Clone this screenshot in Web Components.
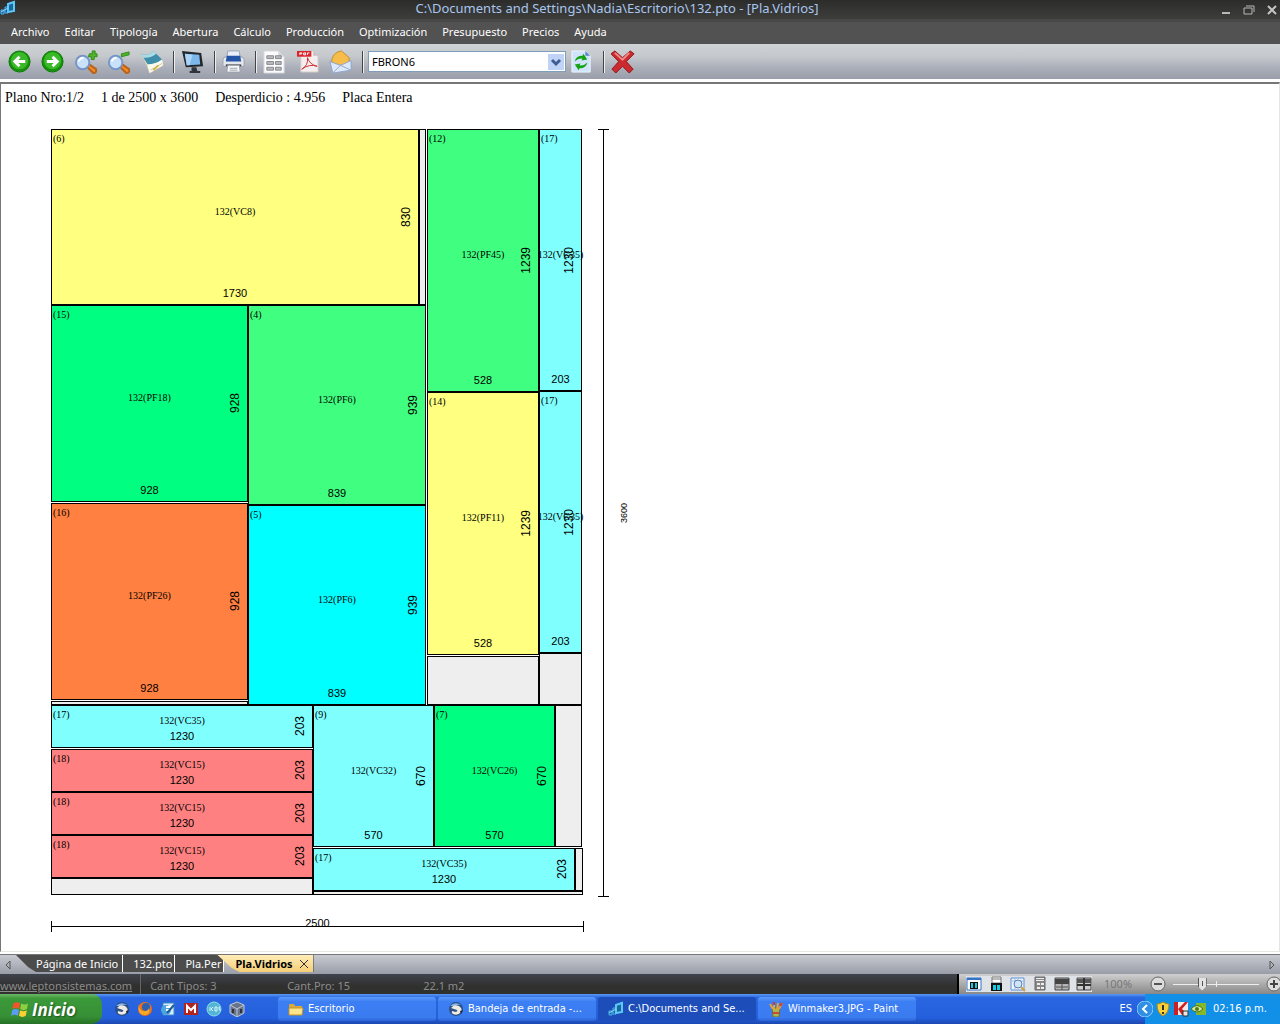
<!DOCTYPE html>
<html lang="es">
<head>
<meta charset="utf-8">
<title>C:\Documents and Settings\Nadia\Escritorio\132.pto - [Pla.Vidrios]</title>
<style>
  html, body {
    height: 100%;
    margin: 0;
  }

  body {
    overflow: hidden;
    font-family: "Noto Sans", "Open Sans", sans-serif;
    font-size: 12px;
  }
</style>
</head>
<body>

<app-window>
  <title-bar slot="top">C:\Documents and Settings\Nadia\Escritorio\132.pto - [Pla.Vidrios]</title-bar>
  <menu-bar slot="top" items="Archivo,Editar,Tipología,Abertura,Cálculo,Producción,Optimización,Presupuesto,Precios,Ayuda"></menu-bar>
  <tool-bar slot="top"></tool-bar>

  <plan-view>
    <span slot="info">Plano Nro:1/2</span>
    <span slot="info">1 de 2500 x 3600</span>
    <span slot="info">Desperdicio : 4.956</span>
    <span slot="info">Placa Entera</span>
    <cutting-sheet></cutting-sheet>
    <dimension-line vertical slot="height">3600</dimension-line>
    <dimension-line slot="width">2500</dimension-line>
  </plan-view>

  <tab-strip slot="bottom">
    <doc-tab>Página de Inicio</doc-tab>
    <doc-tab>132.pto</doc-tab>
    <doc-tab>Pla.Per</doc-tab>
    <doc-tab active>Pla.Vidrios</doc-tab>
  </tab-strip>
  <status-bar slot="bottom"></status-bar>
  <task-bar slot="bottom">
    <task-button icon="folder">Escritorio</task-button>
    <task-button icon="bird">Bandeja de entrada -...</task-button>
    <task-button icon="logo" active>C:\Documents and Se...</task-button>
    <task-button icon="paint">Winmaker3.JPG - Paint</task-button>
  </task-bar>
</app-window>

<script>
const ICONS = {
  logo: `<path d="M1 10h3v4H1zM5 7h3v6H5z" fill="#1c5f9c" stroke="#49b4ee"/><path d="M8 4l6-2v9l-6 1z" fill="#17689f" stroke="#5cc8f8" stroke-width="2"/><path d="M1 12l7-4" stroke="#8fd8ff"/>`,
  back: `<circle cx="12" cy="12" r="11" fill="#16910c" stroke="#0d7a08"/><circle cx="12" cy="11" r="9" fill="#3ab928"/><path d="M18 12H7M12 7l-5 5 5 5" fill="none" stroke="#fff" stroke-width="3"/>`,
  forward: `<circle cx="12" cy="12" r="11" fill="#16910c" stroke="#0d7a08"/><circle cx="12" cy="11" r="9" fill="#3ab928"/><path d="M6 12h11M12 7l5 5-5 5" fill="none" stroke="#fff" stroke-width="3"/>`,
  zoomIn: `<path d="M13 17l3-2 7 5q1 4-3 4z" fill="#f08a24" stroke="#b8621a" stroke-width="2"/><circle cx="9" cy="13" r="7" fill="#c9e2fa" stroke="#7595c8" stroke-width="2"/><path d="M5 12q1-4 5-4" stroke="#fff" stroke-width="2" fill="none"/><path d="M16 4h3V1h3v3h2v3h-3v3h-3V7h-3z" fill="#4fb52b" stroke="#2d8a16"/>`,
  zoomOut: `<path d="M13 17l3-2 7 5q1 4-3 4z" fill="#f08a24" stroke="#b8621a" stroke-width="2"/><circle cx="9" cy="13" r="7" fill="#c9e2fa" stroke="#7595c8" stroke-width="2"/><path d="M5 12q1-4 5-4" stroke="#fff" stroke-width="2" fill="none"/><path d="M15 4l8-2v3l-8 2z" fill="#4fb52b" stroke="#2d8a16"/>`,
  book: `<path d="M1 4l6 12 3 8 14-8-1-5z" fill="#f4f2dc" stroke="#c9c8ad"/><path d="M1 4q7 3 13-3l9 9q-7 5-15 5z" fill="#3f8fac"/><path d="M1 4q7 3 13-3l3 3Q11 9 3 8z" fill="#a9dce6"/><path d="M8 15q8 1 15-5l1 6-14 8z" fill="#fbfaf0"/><path d="M11 21l12-7" stroke="#c3c1a3"/><path d="M14 21l5-5" stroke="#d7b13d" stroke-width="2"/>`,
  monitor: `<path d="M1 1l20 2 2 14-18 1z" fill="#23272d"/><path d="M4 4l15 1 1 10-14 1z" fill="#7db8ec"/><path d="M4 4l8 1-3 11H6z" fill="#a9d4f7"/><path d="M11 18h5l1 4h3v2H9v-2h2z" fill="#30343a"/>`,
  printer: `<path d="M6 1h12l1 8H5z" fill="#e9eef8" stroke="#9aa4b5"/><path d="M1 10q0-3 4-3h14q4 0 4 3v7H1z" fill="#e4e7ec" stroke="#9aa0aa"/><path d="M5 6h14l1 6H4z" fill="#2454a8"/><path d="M4 15h16v2H4z" fill="#3b4048"/><path d="M6 16h12l1 7H5z" fill="#f7f8fa" stroke="#9aa0aa"/><path d="M8 19h8M8 21h8" stroke="#9aa0aa"/>`,
  report: `<path d="M1 1h15l6 6v17H1z" fill="#fcfcfc" stroke="#d5d6da"/><path d="M16 1v6h6z" fill="#d5d6da"/><path d="M4 6h7v3H4zM13 6h6v3h-6zM4 12h7v3H4zM13 12h6v3h-6zM4 18h7v3H4zM13 18h6v3h-6z" fill="#b8babf" stroke="#85878c"/>`,
  pdf: `<path d="M5 1h13l5 5v17H5z" fill="#f4eeee" stroke="#cfc5c5"/><path d="M1 1h15v6H1z" fill="#d8262d"/><path d="M4 5V3h2v1H4M8 5V3h2v2H8M12 5V3h2" stroke="#fff" fill="none"/><path d="M18 1l5 5h-5z" fill="#c5c0c4"/><path d="M6 20q7-4 6-12 2 7 10 9-8-3-16 3z" stroke="#d02c32" stroke-width="1" fill="none"/>`,
  mail: `<path d="M1 12l10-8 12 8v9L4 24z" fill="#e5effc" stroke="#93a6c8"/><path d="M3 10q2-8 10-9l8 7v5l-9 3-9-3z" fill="#f6bd4a" stroke="#c58a26"/><path d="M1 12l11 4 11-5v10L4 24z" fill="#dce9fa" stroke="#93a6c8"/><path d="M4 24l8-8 11 5" fill="none" stroke="#93a6c8"/>`,
  refresh: `<path d="M2 1h14l5 5v17H2z" fill="#cfe3fb" stroke="#eff6ff"/><path d="M16 1l5 5h-5z" fill="#5b83c8"/><path d="M5 12q1-6 8-6l1-2 4 6-6 1 1-2q-4-1-8 3zM18 13q-1 6-8 6l-1 2-4-6 6-1-1 2q4 1 8-3z" fill="#14a313"/>`,
  remove: `<path d="M4 1l8 7 8-7 4 3-8 8 7 8-4 4-7-7-7 7-4-4 7-8-8-8z" fill="#cb2a2e" stroke="#8f1418"/><path d="M4 3l8 7 7-7" stroke="#f08a86" stroke-width="2" fill="none"/>`,
  chevron: `<path d="M4 6l4 4 4-4" fill="none" stroke="#3f5c93" stroke-width="3"/>`,
  minimize: `<path d="M4 11h8" stroke="#b8b8b8" stroke-width="2"/>`,
  restore: `<path d="M3 6h8v6H3zM5 4h8v6" fill="none" stroke="#b8b8b8"/>`,
  close: `<path d="M4 4l8 8M12 4l-8 8" stroke="#c4c4c4" stroke-width="2"/>`,
  scrollLeft: `<path d="M10 4v8L6 8z" fill="none" stroke="#555"/>`,
  scrollRight: `<path d="M6 4v8l4-4z" fill="none" stroke="#555"/>`,
  cross: `<path d="M4 4l8 8M12 4l-8 8" stroke="#333"/>`,
  viewPlan: `<path d="M1 2h14v12H1z" fill="#fff" stroke="#3473c6"/><path d="M1 3h14" stroke="#3473c6" stroke-width="2"/><path d="M4 6h8v7H4z" fill="#111"/><path d="M5 7h2v5H5zM9 7h2v5H9z" fill="#19cde0"/>`,
  viewSheet: `<path d="M4 1h9v6H4z" fill="#fff" stroke="#777"/><path d="M4 3h9" stroke="#777"/><path d="M3 7h11v8H3z" fill="#111"/><path d="M5 9h3v5H5zM9 9h3v5H9z" fill="#19cde0"/>`,
  viewZoom: `<path d="M1 2h13v12H1z" fill="#eef4fc" stroke="#5d92d0"/><path d="M1 5h13M5 2v12" stroke="#9fbfe4"/><circle cx="8" cy="8" r="4" fill="#cfe4f8" stroke="#5b7fae"/><path d="M11 11l4 4" stroke="#d5a03b" stroke-width="2"/>`,
  viewTable: `<path d="M3 1h10v13H3z" fill="#888" stroke="#666"/><path d="M4 2h8v1H4zM4 4h8v1H4z" fill="#eee"/><path d="M5 7h3v2H5zM9 7h3v2H9zM5 11h3v2H5zM9 11h3v2H9z" fill="#eee"/>`,
  viewSplit: `<path d="M1 2h14v12H1z" fill="#b5b5b5" stroke="#444"/><path d="M1 3h14v5H1z" fill="#444"/><path d="M8 8v6M2 11h12" stroke="#555"/>`,
  viewQuad: `<path d="M1 2h14v12H1z" fill="#ccc" stroke="#444"/><path d="M1 3h14v4H1z" fill="#555"/><path d="M8 2v12M1 9h14" stroke="#333" stroke-width="2"/>`,
  minus: `<circle cx="8" cy="8" r="7" fill="#ddd" stroke="#666"/><path d="M4 8h8" stroke="#555" stroke-width="2"/>`,
  plus: `<circle cx="8" cy="8" r="7" fill="#ddd" stroke="#666"/><path d="M4 8h8M8 4v8" stroke="#444" stroke-width="2"/>`,
  windows: `<path d="M3 3q3-2 6 0L8 8Q5 6 2 8z" fill="#f0562a"/><path d="M10 3q3 2 6 0l-1 5q-3 2-6 0z" fill="#8fd03f"/><path d="M2 9q3-2 6 0l-1 5q-3-2-6 0z" fill="#5b9cf5"/><path d="M9 9q3 2 6 0l-1 5q-3 2-6 0z" fill="#fcd02f"/>`,
  bird: `<circle cx="8" cy="8" r="7" fill="#2c4f86"/><path d="M2 5q5-5 11-1-4-1-6 1z" fill="#8ab8ea"/><path d="M3 7q3-4 8-2 4 3 2 6-3 4-8 2-2-1-1-3l4 1q2-1 1-2z" fill="#eceae2"/><path d="M12 10l3-1-2 4z" fill="#1b2436"/>`,
  firefox: `<circle cx="8" cy="8" r="7" fill="#e8701a"/><circle cx="9" cy="6" r="4" fill="#2d5fb3"/><path d="M2 3q0 8 6 7 3 0 4-3 2 6-4 7Q0 14 2 3z" fill="#f7a928"/>`,
  notes: `<path d="M3 2h11v12H3z" fill="#d6ecfb" stroke="#3c86c4"/><circle cx="6" cy="9" r="5" fill="#4aa5e0"/><path d="M6 6h5M6 9h3" stroke="#fff" stroke-width="2"/><path d="M7 12l7-8" fill="none" stroke="#1d5d99" stroke-width="2"/>`,
  gmail: `<path d="M1 2h14v12H1z" fill="#b3231d"/><path d="M4 12V5l4 4 4-4v7" fill="none" stroke="#fff" stroke-width="2"/>`,
  disc: `<circle cx="8" cy="8" r="7" fill="#52b5d3" stroke="#8adbee"/><path d="M4 6v4M7 6L5 8l2 2M9 6v4h2V6zM14 6h-1v2h1v2" fill="none" stroke="#d9f5fb"/>`,
  cube: `<path d="M8 1l7 3v8l-7 4-7-4V4z" fill="#68748a" stroke="#c0c9d6"/><path d="M1 4l7 4 7-4M8 8v8" fill="none" stroke="#c0c9d6"/><path d="M4 8v4M12 8v4" stroke="#2b3444" stroke-width="2"/>`,
  folder: `<path d="M1 4q0-1 1-1h4l1 2h7v9H1z" fill="#d9a93a"/><path d="M1 7h14l-1 7H1z" fill="#fbe48a" stroke="#c4922a"/>`,
  paint: `<path d="M4 7h8l-1 9H5z" fill="#a7b84c" stroke="#6f6a38"/><path d="M6 9V1M9 9l1-7M11 8l3-6M5 8L2 3" stroke="#e0a43c" stroke-width="2"/><path d="M6 1v3M14 2l-2 3" stroke="#d33a2a" stroke-width="2"/><path d="M5 12h6" stroke="#d0473a" stroke-width="2"/>`,
  trayArrow: `<circle cx="8" cy="8" r="8" fill="#2f8fe6" stroke="#8cc8fa"/><path d="M10 4L6 8l4 4" fill="none" stroke="#fff" stroke-width="2"/>`,
  shield: `<path d="M8 1q3 2 6 2 0 9-6 12Q2 12 2 3q3 0 6-2z" fill="#f8cf35" stroke="#a78a22"/><path d="M8 4v5M8 11v2" stroke="#333" stroke-width="2"/>`,
  kav: `<path d="M1 1h14v13H1z" fill="#f3e9e9"/><path d="M5 8l7-7h3l-6 7 6 6H9z" fill="#cf1e20"/><path d="M1 1h4v13H1z" fill="#c92023"/><path d="M10 10h5v5h-5z" fill="#e8e8e8" stroke="#333"/>`,
  nvidia: `<path d="M5 2h10v12H5z" fill="#86b82a"/><path d="M0 8q6-7 12 0-6 6-12 0z" fill="#d5e8a5" stroke="#4f7a12"/><circle cx="6" cy="8" r="2" fill="#4f7a12"/>`
};

function icon(name, size = 16) {
  const box = size === 24 ? 25 : 16;
  return `<svg width="${size}" height="${size}" viewBox="0 0 ${box} ${box}" fill="none" aria-hidden="true">${ICONS[name]}</svg>`;
}

const BUTTON_RESET = `
  button {
    display: grid;
    place-items: center;
    margin: 0;
    padding: 0;
    border: 0;
    background: none;
    color: inherit;
    font: inherit;
  }

  svg { display: block; flex: none; }
`;

class BaseElement extends HTMLElement {
  constructor() {
    super();
    this.attachShadow({ mode: "open" });
  }

  connectedCallback() {
    this.shadowRoot.innerHTML = this.render();
  }
}

class AppWindow extends BaseElement {
  render() {
    return `
      <style>
        :host {
          display: flex;
          flex-direction: column;
          height: 100vh;
          background: #fff;
        }

        main {
          flex: 1;
          min-height: 0;
          display: flex;
        }
      </style>
      <slot name="top"></slot>
      <main><slot></slot></main>
      <slot name="bottom"></slot>
    `;
  }
}

class TitleBar extends BaseElement {
  render() {
    return `
      <style>
        ${BUTTON_RESET}
        :host {
          display: flex;
          height: 19px;
          border-bottom: 3px solid #484848;
          background: linear-gradient(#2c2c2b, #3d3d3c);
          color: #a9c6ee;
          line-height: 16px;
        }

        h1 {
          flex: 1;
          margin: 0;
          font-size: 13px;
          font-weight: 400;
          text-align: center;
        }

        .controls {
          display: flex;
          gap: 7px;
        }
      </style>
      ${icon("logo")}
      <h1><slot></slot></h1>
      <div class="controls">
        <button aria-label="Minimizar">${icon("minimize")}</button>
        <button aria-label="Restaurar">${icon("restore")}</button>
        <button aria-label="Cerrar">${icon("close")}</button>
      </div>
    `;
  }
}

class MenuBar extends BaseElement {
  render() {
    const items = this.getAttribute("items").split(",");
    return `
      <style>
        ${BUTTON_RESET}
        :host {
          display: block;
          background: #525252;
          color: #fff;
          font-size: 11px;
        }

        nav {
          display: flex;
          gap: 15px;
          height: 22px;
          padding: 0 11px;
        }

        button { line-height: 20px; align-items: start; }
      </style>
      <nav>${items.map((item) => `<button>${item}</button>`).join("")}</nav>
    `;
  }
}

class ToolBar extends BaseElement {
  tool(name, label) {
    return `<button aria-label="${label}">${icon(name, 24)}</button>`;
  }

  render() {
    return `
      <style>
        ${BUTTON_RESET}
        :host {
          display: flex;
          align-items: center;
          gap: 9px;
          height: 35px;
          padding: 0 8px;
          background: linear-gradient(#d0d3d5, #c5c8cc 35%, #a9adb8 70%, #9a9eaa);
        }

        hr {
          width: 1px;
          height: 22px;
          margin: 0 -3px 0 0;
          border: 0;
          border-right: 1px solid #eee;
          background: #444;
        }

        .combo {
          display: grid;
          width: 198px;
          margin: 0 -5px 0 -2px;
        }

        .combo > * { grid-area: 1 / 1; }

        .combo svg {
          justify-self: end;
          align-self: center;
          margin-right: 2px;
          background: #c1d2f7;
          pointer-events: none;
        }

        select {
          appearance: none;
          height: 21px;
          padding: 0 3px;
          border: 1px solid #7f9db9;
          border-radius: 0;
          background: #fff;
          color: #000;
          font-family: inherit;
          font-size: 11px;
        }
      </style>
      ${this.tool("back", "Atrás")}
      ${this.tool("forward", "Adelante")}
      ${this.tool("zoomIn", "Acercar")}
      ${this.tool("zoomOut", "Alejar")}
      ${this.tool("book", "Catálogo")}
      <hr>
      ${this.tool("monitor", "Pantalla")}
      <hr>
      ${this.tool("printer", "Imprimir")}
      <hr>
      ${this.tool("report", "Planilla")}
      ${this.tool("pdf", "Exportar PDF")}
      ${this.tool("mail", "Enviar")}
      <hr>
      <div class="combo">
        <select aria-label="Vidrio"><option>FBRON6</option></select>
        ${icon("chevron")}
      </div>
      ${this.tool("refresh", "Actualizar")}
      <hr>
      ${this.tool("remove", "Eliminar")}
    `;
  }
}

class PlanView extends BaseElement {
  render() {
    return `
      <style>
        :host {
          flex: 1;
          display: block;
          margin-top: 3px;
          border: 1px solid #777;
          border-width: 2px 1px 1px 1px;
          border-color: #777 #e4e4e4 #e8e6e0 #777;
          background: #fff;
          color: #000;
        }

        header {
          display: flex;
          gap: 17px;
          height: 45px;
          padding-left: 4px;
          font: 14px/28px "Liberation Serif", serif;
        }

        .plan {
          display: grid;
          grid-template-columns: 532px auto;
          justify-content: start;
          gap: 20px 15px;
          padding-left: 50px;
        }
      </style>
      <header><slot name="info"></slot></header>
      <div class="plan">
        <slot></slot>
        <slot name="height"></slot>
        <slot name="width"></slot>
      </div>
    `;
  }
}

const YELLOW = "#ffff80";
const GREEN = "#00ff80";
const LIGHT_GREEN = "#40ff80";
const ORANGE = "#ff8040";
const CYAN = "#00ffff";
const LIGHT_CYAN = "#80ffff";
const RED = "#ff8080";
const WASTE = "#eeeeee";

// left, top, width, height, colour, mark, code, size across, size down
const PIECES = [
  [0, 0, 368, 176, YELLOW, 6, "132(VC8)", 1730, 830],
  [368, 0, 7, 176, WASTE],
  [376, 0, 112, 263, LIGHT_GREEN, 12, "132(PF45)", 528, 1239],
  [488, 0, 43, 262, LIGHT_CYAN, 17, "132(VC35)", 203, 1230],
  [0, 176, 197, 197, GREEN, 15, "132(PF18)", 928, 928],
  [197, 176, 178, 200, LIGHT_GREEN, 4, "132(PF6)", 839, 939],
  [376, 263, 112, 263, YELLOW, 14, "132(PF11)", 528, 1239],
  [488, 262, 43, 262, LIGHT_CYAN, 17, "132(VC35)", 203, 1230],
  [0, 374, 197, 197, ORANGE, 16, "132(PF26)", 928, 928],
  [0, 572, 197, 4, WASTE],
  [197, 376, 178, 200, CYAN, 5, "132(PF6)", 839, 939],
  [376, 527, 112, 49, WASTE],
  [488, 524, 43, 52, WASTE],
  [0, 576, 262, 43, LIGHT_CYAN, 17, "132(VC35)", 1230, 203],
  [0, 620, 262, 43, RED, 18, "132(VC15)", 1230, 203],
  [0, 663, 262, 43, RED, 18, "132(VC15)", 1230, 203],
  [0, 706, 262, 43, RED, 18, "132(VC15)", 1230, 203],
  [0, 749, 262, 17, WASTE],
  [262, 576, 121, 142, LIGHT_CYAN, 9, "132(VC32)", 570, 670],
  [383, 576, 121, 142, GREEN, 7, "132(VC26)", 570, 670],
  [504, 576, 27, 142, WASTE],
  [262, 719, 262, 43, LIGHT_CYAN, 17, "132(VC35)", 1230, 203],
  [524, 719, 8, 43, WASTE],
  [262, 762, 270, 4, WASTE]
];

class CuttingSheet extends BaseElement {
  connectedCallback() {
    super.connectedCallback();
    for (const [left, top, width, height, color, mark, code, across, down] of PIECES) {
      const piece = document.createElement("glass-piece");
      Object.assign(piece.style, {
        left: `${left}px`,
        top: `${top}px`,
        width: `${width}px`,
        height: `${height}px`,
        background: color
      });
      if (code) {
        piece.innerHTML = `
          <span slot="mark">(${mark})</span>
          <span slot="code">${code}</span>
          <span slot="across">${across}</span>
          <span slot="down">${down}</span>`;
      }
      this.shadowRoot.append(piece);
    }
  }

  render() {
    return `
      <style>
        :host {
          display: block;
          position: relative;
          height: 768px;
        }

        glass-piece { position: absolute; }
      </style>
    `;
  }
}

class GlassPiece extends BaseElement {
  render() {
    return `
      <style>
        :host {
          display: grid;
          grid-template: 100% / 100%;
          box-sizing: border-box;
          border: 1px solid #000;
          color: #000;
          white-space: nowrap;
        }

        slot {
          display: block;
          grid-area: 1 / 1;
        }

        [name="mark"],
        [name="code"] {
          font: 10px/12px "Liberation Serif", serif;
        }

        [name="mark"] {
          place-self: start;
          padding: 3px 1px;
        }

        [name="code"] {
          place-self: center;
          padding-bottom: 11px;
        }

        [name="across"] {
          place-self: end center;
          padding-bottom: 5px;
          font: 11px/12px "Liberation Sans", sans-serif;
        }

        [name="down"] {
          place-self: center end;
          margin-right: 5px;
          font: 12px/14px "Liberation Sans", sans-serif;
          writing-mode: vertical-rl;
          transform: rotate(180deg);
        }
      </style>
      <slot name="mark"></slot>
      <slot name="code"></slot>
      <slot name="across"></slot>
      <slot name="down"></slot>
    `;
  }
}

class DimensionLine extends BaseElement {
  render() {
    return `
      <style>
        :host {
          display: grid;
          width: 533px;
          height: 15px;
          font: 11px/12px "Liberation Sans", sans-serif;
        }

        :host([vertical]) {
          grid-template-columns: 11px auto;
          gap: 9px;
          width: auto;
          height: 768px;
          font-size: 9px;
        }

        i {
          grid-area: 1 / 1;
          align-self: end;
          height: 11px;
          box-sizing: border-box;
          border: 1px solid #000;
          border-width: 0 1px;
          background: linear-gradient(#000, #000) center / 100% 1px no-repeat;
        }

        :host([vertical]) i {
          height: auto;
          align-self: stretch;
          border-width: 1px 0;
          background-size: 1px 100%;
        }

        span {
          grid-area: 1 / 1;
          place-self: start center;
        }

        :host([vertical]) span {
          grid-area: 1 / 2;
          align-self: center;
          writing-mode: vertical-rl;
          transform: rotate(180deg);
        }
      </style>
      <i></i>
      <span><slot></slot></span>
    `;
  }
}

class TabStrip extends BaseElement {
  render() {
    return `
      <style>
        ${BUTTON_RESET}
        :host {
          display: flex;
          height: 19px;
          margin-top: 2px;
          border-top: 1px solid #777;
          background: linear-gradient(#c8cad1, #999da7);
        }

        .tabs {
          flex: 1;
          display: flex;
          padding-bottom: 2px;
        }
      </style>
      <button aria-label="Anterior">${icon("scrollLeft")}</button>
      <div class="tabs"><slot></slot></div>
      <button aria-label="Siguiente">${icon("scrollRight")}</button>
    `;
  }
}

class DocTab extends BaseElement {
  render() {
    const active = this.hasAttribute("active");
    return `
      <style>
        ${BUTTON_RESET}
        :host {
          display: flex;
          padding: 0 2px 0 10px;
          border-right: 1px solid #fff;
          background: #4c4c4c;
          color: #fff;
          font-size: 11px;
          line-height: 17px;
        }

        :host(:first-child) {
          padding: 0 4px 0 20px;
          clip-path: polygon(0 0, 100% 0, 100% 100%, 20px 100%, 12px 70%);
        }

        :host([active]) {
          gap: 3px;
          margin-left: -7px;
          padding: 0 1px 0 18px;
          border-right-color: #555;
          background: linear-gradient(#ffedb8, #f5cd76);
          color: #000;
          font-weight: 700;
          clip-path: polygon(0 0, 100% 0, 100% 100%, 22px 100%, 14px 75%);
        }
      </style>
      <button><slot></slot></button>
      ${active ? `<button aria-label="Cerrar pestaña">${icon("cross")}</button>` : ""}
    `;
  }
}

class StatusBar extends BaseElement {
  render() {
    const views = [
      ["viewPlan", "Plano"],
      ["viewSheet", "Hoja"],
      ["viewZoom", "Detalle"],
      ["viewTable", "Tabla"],
      ["viewSplit", "Dividir"],
      ["viewQuad", "Cuadrantes"]
    ];
    return `
      <style>
        ${BUTTON_RESET}
        :host {
          display: flex;
          height: 20px;
          overflow: hidden;
          background: linear-gradient(#3f434c, #30302f 60%);
          color: #8b8b8b;
          font-size: 11px;
          line-height: 24px;
        }

        a {
          margin-right: 8px;
          color: inherit;
        }

        .counts {
          flex: 1;
          display: grid;
          grid-template-columns: 137px 136px auto;
          justify-content: start;
          padding-left: 9px;
          border-left: 1px solid #666;
        }

        .zoom {
          display: flex;
          align-items: center;
          width: 321px;
          border-left: 2px solid #000;
          background: linear-gradient(#cfcfcf, #888);
          color: #777;
          white-space: nowrap;
        }

        .views {
          display: flex;
          gap: 6px;
          margin-left: 7px;
          background: #dfe3e8;
        }

        label { margin: 0 18px 0 12px; }

        input {
          appearance: none;
          flex: none;
          width: 86px;
          height: 16px;
          margin: 0 7px;
          background:
            linear-gradient(#eee, #eee) 43px 5px / 1px 6px no-repeat,
            linear-gradient(#eee, #eee) center / 100% 1px no-repeat;
        }

        input::-webkit-slider-thumb {
          appearance: none;
          width: 9px;
          height: 13px;
          background:
            linear-gradient(#555, #555) 4px 3px / 1px 5px no-repeat,
            linear-gradient(90deg, #555 1px, #e2e2e2 1px 8px, #555 8px);
          clip-path: polygon(0 0, 100% 0, 100% 65%, 50% 100%, 0 65%);
        }
      </style>
      <a href="#">www.leptonsistemas.com</a>
      <div class="counts">
        <span>Cant Tipos: 3</span>
        <span>Cant.Pro: 15</span>
        <span>22.1 m2</span>
      </div>
      <div class="zoom">
        <div class="views">
          ${views.map(([name, label]) => `<button aria-label="${label}">${icon(name)}</button>`).join("")}
        </div>
        <label for="zoom">100%</label>
        <button aria-label="Reducir">${icon("minus")}</button>
        <input id="zoom" type="range" value="32">
        <button aria-label="Ampliar">${icon("plus")}</button>
      </div>
    `;
  }
}

class TaskBar extends BaseElement {
  render() {
    const launchers = [
      ["bird", "Correo"],
      ["firefox", "Navegador"],
      ["notes", "Escritorio"],
      ["gmail", "Gmail"],
      ["disc", "KDS"],
      ["cube", "Máquina virtual"]
    ];
    return `
      <style>
        ${BUTTON_RESET}
        :host {
          display: flex;
          height: 30px;
          background: linear-gradient(#5a9af5, #2a66e0 12%, #2460dd 80%, #1b47b0);
          color: #fff;
          font: 11px/30px "DejaVu Sans Condensed", "DejaVu Sans", sans-serif;
        }

        .start {
          display: flex;
          align-items: center;
          gap: 4px;
          width: 102px;
          padding-left: 10px;
          border-radius: 0 10px 10px 0;
          background: linear-gradient(#6cb868, #3c9a3a 15%, #368f35 75%, #257025);
          font: italic 700 17px "Open Sans", sans-serif;
          text-shadow: 1px 1px 2px #1a4a1a;
        }

        .launch {
          display: flex;
          gap: 7px;
          width: 164px;
          padding-left: 12px;
        }

        .tasks {
          flex: 1;
          display: flex;
          gap: 2px;
          padding: 3px 0;
        }

        .tray {
          display: flex;
          align-items: center;
          gap: 2px;
          width: 143px;
          background: linear-gradient(90deg, transparent 8px, #1290e8 8px);
        }

        time { margin-left: 4px; }
        .lang { margin-right: 5px; }
      </style>
      <button class="start">${icon("windows", 18)}Inicio</button>
      <div class="launch">
        ${launchers.map(([name, label]) => `<button aria-label="${label}">${icon(name)}</button>`).join("")}
      </div>
      <div class="tasks"><slot></slot></div>
      <span class="lang">ES</span>
      <div class="tray">
        <button aria-label="Mostrar iconos ocultos">${icon("trayArrow")}</button>
        ${icon("shield")}
        ${icon("kav")}
        ${icon("nvidia")}
        <time>02:16 p.m.</time>
      </div>
    `;
  }
}

class TaskButton extends BaseElement {
  render() {
    return `
      <style>
        ${BUTTON_RESET}
        :host {
          display: block;
          flex: 0 1 158px;
        }

        button {
          display: flex;
          align-items: center;
          gap: 4px;
          width: 100%;
          height: 24px;
          padding-left: 10px;
          border-radius: 3px;
          background: linear-gradient(#5d9bfa, #3c7ef3 20%, #3a7bf0 85%, #2d63d4);
          line-height: 24px;
          white-space: nowrap;
        }

        :host([active]) button { background: #1c4db8; }
      </style>
      <button>${icon(this.getAttribute("icon"))}<slot></slot></button>
    `;
  }
}

customElements.define("app-window", AppWindow);
customElements.define("title-bar", TitleBar);
customElements.define("menu-bar", MenuBar);
customElements.define("tool-bar", ToolBar);
customElements.define("plan-view", PlanView);
customElements.define("glass-piece", GlassPiece);
customElements.define("cutting-sheet", CuttingSheet);
customElements.define("dimension-line", DimensionLine);
customElements.define("tab-strip", TabStrip);
customElements.define("doc-tab", DocTab);
customElements.define("status-bar", StatusBar);
customElements.define("task-bar", TaskBar);
customElements.define("task-button", TaskButton);
</script>
</body>
</html>
